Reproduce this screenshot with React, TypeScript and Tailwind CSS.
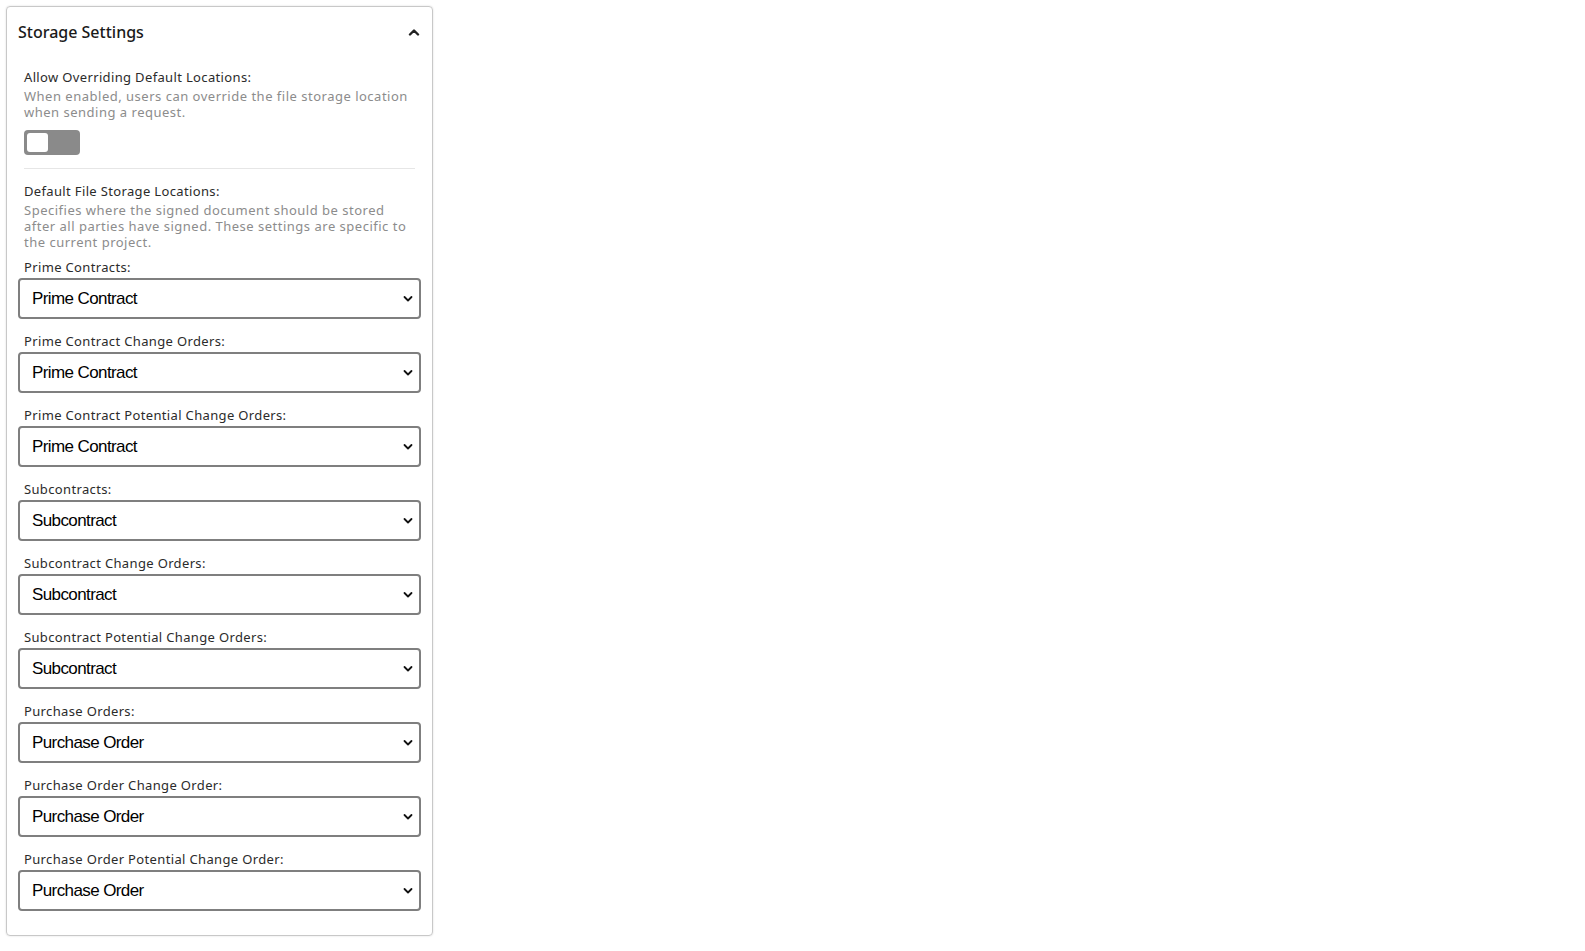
import React from "react";

const fields: { label: string; value: string }[] = [
  { label: "Prime Contracts:", value: "Prime Contract" },
  { label: "Prime Contract Change Orders:", value: "Prime Contract" },
  { label: "Prime Contract Potential Change Orders:", value: "Prime Contract" },
  { label: "Subcontracts:", value: "Subcontract" },
  { label: "Subcontract Change Orders:", value: "Subcontract" },
  { label: "Subcontract Potential Change Orders:", value: "Subcontract" },
  { label: "Purchase Orders:", value: "Purchase Order" },
  { label: "Purchase Order Change Order:", value: "Purchase Order" },
  { label: "Purchase Order Potential Change Order:", value: "Purchase Order" },
];

function ChevronDown() {
  return (
    <svg width="10" height="7" viewBox="0 0 10 7" fill="none" className="pointer-events-none absolute right-[8px] top-1/2 -translate-y-1/2">
      <path d="M1.5 1.5 L5 5 L8.5 1.5" stroke="#111" strokeWidth="1.8" strokeLinecap="round" strokeLinejoin="round" />
    </svg>
  );
}

function LocationSelect({ label, value }: { label: string; value: string }) {
  return (
    <div className="mt-[14px] first:mt-[9px]">
      <label className="block px-[6px] text-[13px] leading-[16px] tracking-[0.35px] text-[#2b2b2b]">{label}</label>
      <div className="relative mt-[3px]">
        <select
          defaultValue={value}
          className="block h-[41px] w-full appearance-none rounded-[4px] border-2 border-[#7f7f7f] bg-white pl-[12px] text-[17px] tracking-[-0.6px] text-black outline-none font-['Liberation_Sans',Arial,sans-serif]"
        >
          <option>{value}</option>
        </select>
        <ChevronDown />
      </div>
    </div>
  );
}

export default function App() {
  return (
    <div className="min-h-screen bg-white p-[6px] font-['Noto_Sans',sans-serif]">
      <div className="w-[427px] rounded-[4px] border border-[#c8c8c8] shadow-[0_0_2px_rgba(0,0,0,0.15)] px-[11px] pb-[24px]">
        <div className="flex h-[49px] items-center justify-between">
          <h2 className="text-[16px] font-medium text-[#1a1a1a]">Storage Settings</h2>
          <svg width="12" height="8" viewBox="0 0 12 8" fill="none" className="mr-[1px]">
            <path d="M2 6.5 L6 2.5 L10 6.5" stroke="#222" strokeWidth="2.4" strokeLinecap="round" strokeLinejoin="round" />
          </svg>
        </div>

        <div className="px-[6px] pt-[13px]">
          <div className="text-[13px] leading-[16px] tracking-[0.35px] text-[#2b2b2b]">Allow Overriding Default Locations:</div>
          <p className="mt-[3px] text-[13px] leading-[16px] tracking-[0.5px] text-[#8c8c8c]">
            When enabled, users can override the file storage location when sending a request.
          </p>
          <button className="mt-[10px] flex h-[25px] w-[56px] items-center rounded-[4px] bg-[#8a8a8a] p-[3px]">
            <span className="h-[19px] w-[21px] rounded-[3px] bg-white" />
          </button>
          <div className="mt-[13px] h-px bg-[#e6e6e6]" />
          <div className="mt-[14px] text-[13px] leading-[16px] tracking-[0.35px] text-[#2b2b2b]">Default File Storage Locations:</div>
          <p className="mt-[3px] text-[13px] leading-[16px] tracking-[0.5px] text-[#8c8c8c]">
            Specifies where the signed document should be stored after all parties have signed. These settings are specific to the current project.
          </p>
        </div>

        <div>
          {fields.map((f) => (
            <LocationSelect key={f.label} label={f.label} value={f.value} />
          ))}
        </div>
      </div>
    </div>
  );
}
